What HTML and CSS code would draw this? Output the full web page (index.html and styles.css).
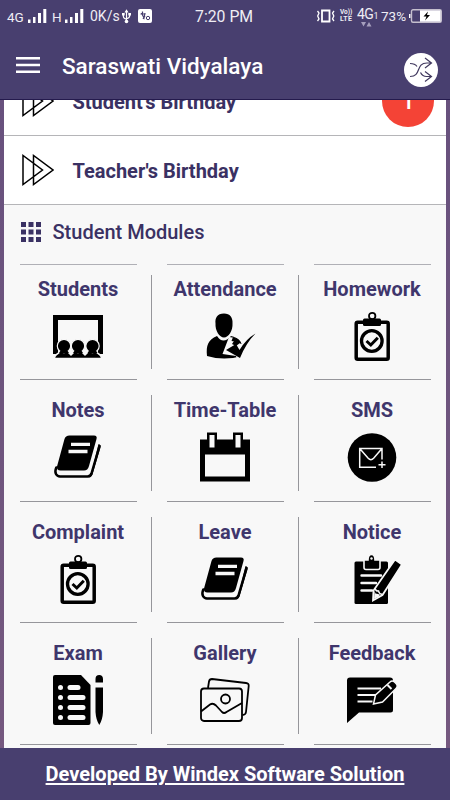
FILE: index.html
```html
<!DOCTYPE html>
<html lang="en">
<head>
<meta charset="utf-8">
<title>Saraswati Vidyalaya</title>
<link rel="stylesheet" href="styles.css">
</head>
<body>
<svg class="defs" aria-hidden="true">
  <symbol id="signal" viewBox="0 0 19 15"><path fill="#fff" d="M0 10.500h2.500V14H0zM5 8h2.500v6H5zM10 4h3v10h-3zM15.300 0h3v14h-3z"/></symbol>
  <symbol id="forward" viewBox="0 0 32 32"><path fill="none" stroke="#000" stroke-width="1.500" d="M1 1.500v29L20.500 16zM11.500 1.500v29L31 16z"/></symbol>
  <symbol id="clipboard" viewBox="0 0 50 50">
    <rect x="9.200" y="11.200" width="32" height="37" rx="1.500" fill="none" stroke="#000" stroke-width="3.500"/>
    <rect x="16" y="7.500" width="18" height="7.500" rx="1.500"/>
    <circle cx="25.200" cy="5" r="3.200" fill="none" stroke="#000" stroke-width="1.800"/>
    <circle cx="24.800" cy="30" r="10.300" fill="none" stroke="#000" stroke-width="3.300"/>
    <path fill="none" stroke="#000" stroke-width="3" d="M19.500 30l4.300 4 7-7.300"/>
  </symbol>
  <symbol id="book" viewBox="0 0 50 50">
    <path d="M16.500 3.500H41q3.500 0 2.500 3.500L36 34q-1.200 4.500-5 4.500H7.500q-4 0-3.500-4L11.500 7q1-3.500 5-3.500z"/>
    <path fill="none" stroke="#000" stroke-width="2.500" stroke-linecap="round" d="M3.300 35.500C1 41 3.500 44.500 7 44.500h27.500q3 0 4-3L46.500 14"/>
    <path d="M45.500 12q2.500 1 2 3.500l-8 27q-1.500 3-4 3l3-5z"/>
    <path stroke="#f8f8f8" stroke-width="3.300" d="M18 12.300h19M15.500 19.500h19"/>
  </symbol>
</svg>
<div class="phone">
  <header class="top">
    <div class="status">
      <span class="s-net">4G</span>
      <svg class="s-signal"><use href="#signal"/></svg>
      <span class="s-net s-h">H</span>
      <svg class="s-signal"><use href="#signal"/></svg>
      <span class="s-rate">0K/s</span>
      <svg class="s-usb" viewBox="0 0 10 16"><path fill="none" stroke="#fff" stroke-width="1.300" d="M5 2v12M1.500 5v3q0 2 3.500 3M8.500 5v2.500q0 2-3.500 3"/><path fill="#fff" d="M5 0l2.300 3.500H2.700zM0 4h3v3H0zM7 4h3v3H7z"/><circle cx="5" cy="13.500" r="2" fill="#fff"/></svg>
      <svg class="s-app" viewBox="0 0 14 14"><rect width="14" height="14" rx="2" fill="#fff"/><path fill="none" stroke="#483f6f" stroke-width="1.200" d="M3.500 4l2.500 5 1-5M2.500 5h5M4.500 2.500v3M7 7l-2 3"/><circle cx="10" cy="9" r="1.700" fill="none" stroke="#483f6f"/></svg>
      <span class="s-time">7:20 PM</span>
      <svg class="s-vibrate" viewBox="0 0 18 14"><path fill="none" stroke="#fff" stroke-width="1.800" d="M5 1.500h7.500v11H5z"/><path fill="none" stroke="#fff" stroke-width="1.300" d="M.5 2l1.500 2L.7 7 2 10 .5 12M17 2l-1.500 2 1.300 3-1.300 3 1.500 2"/></svg>
      <span class="s-volte"><b>Vo))</b><b class="lte">LTE</b></span>
      <span class="s-data"><span>4G<small>1</small></span><svg viewBox="0 0 11 5"><path fill="#a69fbd" d="M0 0h5L2.500 4.500zM5.500 4.500h5L8 0z"/></svg></span>
      <span class="s-percent">73%</span>
      <svg class="s-battery" viewBox="0 0 33 14"><path fill="#fff" d="M0 5h1.500v4H0z"/><rect x="2.500" y=".7" width="29.800" height="12.600" rx="1.500" fill="#483f6f" stroke="#c5bfce" stroke-width="1.400"/><path fill="#fff" d="M11 1.300h20.700v11.400H11z"/><path d="M19 2.500l-4.500 5h3L16 11.500l5-5.500h-3z"/></svg>
    </div>
    <div class="appbar">
      <svg class="menu" viewBox="0 0 24 16"><path stroke="#fff" stroke-width="2.400" d="M0 1.300h24M0 8h24M0 14.700h24"/></svg>
      <h1>Saraswati Vidyalaya</h1>
      <svg class="shuffle" viewBox="0 0 34 34"><circle cx="17" cy="17" r="17" fill="#fff"/><path fill="none" stroke="#41395f" stroke-width="1.200" d="M6 10.500q5 0 7 3M6 23.500c12 0 5-13.500 17-13.500h4.500M16.500 19.500q2 4 6 4h5M21 5l6.500 5-6.500 5M21 18.500l6.500 5-6.500 5"/></svg>
    </div>
  </header>
  <main>
    <div class="row first"><svg><use href="#forward"/></svg><span>Student's Birthday</span><b class="badge">1</b></div>
    <div class="row"><svg><use href="#forward"/></svg><span>Teacher's Birthday</span></div>
    <h2><svg viewBox="0 0 20 20"><path fill="#3a3163" d="M0 0h5v5H0zM7.500 0h5v5h-5zM15 0h5v5h-5zM0 7.500h5v5H0zM7.500 7.500h5v5h-5zM15 7.500h5v5h-5zM0 15h5v5H0zM7.500 15h5v5h-5zM15 15h5v5h-5z"/></svg>Student Modules</h2>
    <div class="grid">
      <div class="cell"><span>Students</span>
        <svg viewBox="0 0 50 50"><path d="M0 4h50v39h-5V9H5v34H0z"/><path stroke="#f8f8f8" stroke-width="1.500" d="M1 47.500c1-5 5-5 7-7.500h6l4 4 4-4h6l4 4 4-4h6c2 2.500 6 2.500 7 7.500z"/><g stroke="#f8f8f8" stroke-width="1.200"><circle cx="11" cy="35" r="6.700"/><circle cx="25" cy="35" r="6.700"/><circle cx="39.500" cy="35" r="6.700"/></g><path d="M8 39h6l2 3H6zM22 39h6l2 3H20zM36.500 39h6l2 3h-10z"/></svg></div>
      <div class="cell"><span>Attendance</span>
        <svg viewBox="0 0 50 50"><path d="M24 2.500c6 0 9 4 8.500 10 .5 7-4 14-8.500 14s-9-7-8.500-14C15 7 17 2.500 24 2.500z"/><path d="M17 25q6 9 14 0c8 2 10 5 11 10v10q-18 5-35 0C6 34 8 29 17 25z"/><path fill="#f8f8f8" d="M29 26l-6.500 17 13.500 2 1 3h5l6-12-8-4-4 3-4-2 4-6z"/><path d="M26 39l10-6 3.500 6Q46 28 55.500 22.500 46 32 40 47z"/><path d="M33 26q7 2 8.500 7l-4-2-6-1z"/></svg></div>
      <div class="cell"><span>Homework</span><svg><use href="#clipboard"/></svg></div>
      <div class="cell"><span>Notes</span><svg><use href="#book"/></svg></div>
      <div class="cell"><span>Time-Table</span>
        <svg viewBox="0 0 50 50"><path fill-rule="evenodd" d="M0 7.500h7V.5h10v7h16V.5h10v7h7v42H0zM5 22.500v22h40v-22zM9.500 3v12.500h5V3zM35.500 3v12.500h5V3z"/></svg></div>
      <div class="cell"><span>SMS</span>
        <svg viewBox="0 0 50 50"><circle cx="25" cy="25.500" r="24.300"/><path fill="none" stroke="#f8f8f8" stroke-width="1.500" d="M29 35.200H12.700V16.500H35v11M12.700 16.500l8.500 9.800q2.700 2.700 5.400 0L35 16.500M35 29.500v6.500M31.500 32.700h7"/></svg></div>
      <div class="cell"><span>Complaint</span><svg><use href="#clipboard"/></svg></div>
      <div class="cell"><span>Leave</span><svg><use href="#book"/></svg></div>
      <div class="cell"><span>Notice</span>
        <svg viewBox="0 0 50 50"><rect x="7.500" y="7.500" width="33.500" height="42.500" rx="1.500"/><path stroke="#f8f8f8" stroke-width="1.600" d="M17 6h4q0-5.500 3.500-5.500T28 6h5v7.500q0 2-2 2H19q-2 0-2-2z"/><circle cx="24.500" cy="4.500" r="1.200" fill="#f8f8f8"/><path stroke="#f8f8f8" stroke-width="2.400" stroke-linecap="round" d="M14.500 21.500H34M14.500 29H29M14.500 36.500H25"/><path stroke="#f8f8f8" stroke-width="1.800" d="M48 5.500l7 5L35.500 41 26 46.500l.5-10z"/><path fill="none" stroke="#f8f8f8" stroke-width="1.500" d="M28 34.500q1 3 3.500 2.500.5 3 4 3.500"/><path fill="#f8f8f8" d="M27.500 37l1 2.500 4.500 1-1 2-5 2.500z"/></svg></div>
      <div class="cell"><span>Exam</span>
        <svg viewBox="0 0 50 50"><path d="M2 0h26l9.500 10v38q0 2-2 2H2q-2 0-2-2V2q0-2 2-2z"/><g fill="#f8f8f8"><circle cx="7.500" cy="12.500" r="2.500"/><circle cx="7.500" cy="22.500" r="2.500"/><circle cx="7.500" cy="32.500" r="2.500"/><circle cx="7.500" cy="42.500" r="2.500"/><rect x="14.500" y="10" width="13" height="5" rx="2.500"/><rect x="14.500" y="20" width="18" height="5" rx="2.500"/><rect x="14.500" y="30" width="18" height="5" rx="2.500"/><rect x="14.500" y="40" width="18" height="5" rx="2.500"/></g><path d="M42.500 7.500V4q0-4 3.700-4T50 4v3.500zM42.500 12.500H50V37q-.5 8-3.700 13-3.300-5-3.800-13z"/></svg></div>
      <div class="cell"><span>Gallery</span>
        <svg viewBox="0 0 50 50"><g fill="none" stroke="#000" stroke-width="1.800"><rect x="1" y="13.500" width="41" height="32.500" rx="3"/><path d="M8 13l1-6.500Q9.500 4 12 4l34 4q3 .3 2.700 3L46 37q-.4 3-3.500 3M1 36.500l9-7q3-2 6 1l6 6.500q2 2 4.500 0L42 28"/><circle cx="25.500" cy="24" r="4.500"/></g></svg></div>
      <div class="cell"><span>Feedback</span>
        <svg viewBox="0 0 50 50"><path d="M3 2.500h40q3 0 3 3V35q0 2.500-2.500 2.500H12L0 48V5.500q0-3 3-3z"/><path stroke="#f8f8f8" stroke-width="1.800" d="M10.500 13.500h23.500M10.500 20h18.500M10.500 26.500h15"/><path stroke="#f8f8f8" stroke-width="1.500" d="M43 7q2-2 4.500 0l1.500 1.500q2.500 2.500 0 5L35.500 27l-9 2 2-9z"/><path stroke="#f8f8f8" stroke-width="2" d="M40.500 10l4 4"/></svg></div>
    </div>
  </main>
  <footer><a>Developed By Windex Software Solution</a></footer>
</div>
</body>
</html>
```

FILE: styles.css
```css
* { box-sizing: border-box; }
body { margin: 0; font-family: Roboto, "Liberation Sans", sans-serif; }
svg { display: block; flex: none; overflow: visible; }
.defs { width: 0; height: 0; position: absolute; }
.phone {
  width: 450px; height: 800px; overflow: hidden;
  display: flex; flex-direction: column;
  background: linear-gradient(#66507d, #76597f);
}
.top { height: 100px; flex: none; background: #483f6f; border-bottom: 1px solid #241a4d; color: #fff; }
.status { height: 32px; display: flex; align-items: center; padding-left: 7px; font-size: 15px; white-space: nowrap; color: #efedf4; }
.status span { flex: none; }
.s-net { width: 21px; font-size: 13.500px; padding-top: 2px; }
.s-h { width: 13px; margin-left: 5px; }
.s-signal { width: 19px; height: 15px; }
.s-rate { width: 32px; margin-left: 6px; font-size: 14px; }
.s-usb { width: 9px; height: 15px; }
.s-app { width: 14px; height: 14px; margin-left: 7px; }
.s-time { width: 60px; margin-left: 43px; font-size: 15.800px; }
.s-vibrate { width: 18px; height: 14px; margin-left: 62px; }
.s-volte { width: 16px; margin-left: 5px; font-size: 6.500px; line-height: 7px; }
.s-volte b { display: block; }
.s-volte .lte { font-size: 7px; letter-spacing: .3px; }
.s-data { width: 22px; margin-left: 1px; padding-top: 2px; font-size: 14px; line-height: 13px; letter-spacing: -.5px; }
.s-data small { font-size: 9px; }
.s-data svg { width: 11px; height: 5px; margin: -1px 0 0 4px; }
.s-percent { width: 27px; margin-left: 2px; font-size: 13.500px; }
.s-battery { width: 33px; height: 14px; margin-left: 1px; }
.appbar { height: 67px; display: flex; align-items: center; padding: 0 12px 0 16px; }
.menu { width: 24px; height: 16px; margin-top: -2px; }
.appbar h1 { flex: 1; margin: 1px 0 0 22px; font-size: 22.500px; font-weight: 500; }
.shuffle { width: 34px; height: 34px; margin-top: 8px; }
main { flex: 1; min-height: 0; overflow: hidden; margin: 0 4px; background: #f8f8f8; }
.row { height: 69px; display: flex; align-items: center; padding: 0 12px 0 18px; background: #fff; border-bottom: 1px solid #b5b5b8; color: #3a3163; font-size: 20px; font-weight: 700; }
.row.first { margin-top: -33px; }
.row svg { width: 32px; height: 32px; }
.row span { flex: 1; margin: 1px 0 0 18.500px; }
.badge { width: 52px; height: 52px; border-radius: 50%; background: #f44336; color: #fff; display: flex; align-items: center; justify-content: center; font-size: 23px; font-weight: 500; }
h2 { height: 59px; margin: 0; padding: 0 0 6px 17px; display: flex; align-items: center; color: #3a3163; font-size: 20px; font-weight: 500; }
h2 svg { width: 20px; height: 20px; margin-right: 11.500px; }
.grid { display: grid; grid-template-columns: repeat(3, 117px); grid-auto-rows: 116.400px; gap: 5px 30px; padding-left: 16px; }
.cell { position: relative; display: flex; flex-direction: column; align-items: center; border-bottom: 1px solid #96969b; color: #3f366c; font-size: 20px; font-weight: 700; }
.cell:nth-child(-n+3) { border-top: 1px solid #b0b0b6; }
.cell span { height: 24px; line-height: 24px; margin: 13px 1px 0 0; }
.cell:nth-child(-n+3) span { margin-top: 12px; }
.cell > svg { width: 50px; height: 50px; margin: 10px 1px 0 0; }
.cell:not(:nth-child(3n))::after { content: ""; position: absolute; right: -15px; top: 10px; bottom: 10px; width: 1px; background: #96969b; }
footer { height: 52px; flex: none; display: flex; align-items: center; justify-content: center; background: #483f6f; color: #fff; font-size: 20px; font-weight: 700; }
footer a { text-decoration: underline; text-decoration-thickness: 2px; text-underline-offset: 2px; }
```
